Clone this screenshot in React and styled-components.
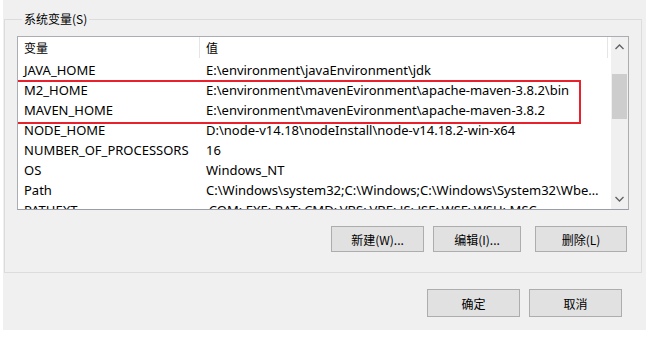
import React from 'react';
import styled, { createGlobalStyle } from 'styled-components';

const GlobalStyle = createGlobalStyle`
  html, body {
    margin: 0;
    padding: 0;
    background: #ffffff;
  }
  body {
    font-family: "Noto Sans", "Noto Sans CJK SC", sans-serif;
    font-size: 13px;
    color: #000;
  }
`;

const Dialog = styled.div`
  margin-left: 3px;
  width: 643px;
  height: 330px;
  background: #f0f0f0;
  display: flex;
  flex-direction: column;
  padding-top: 11px;
  box-sizing: border-box;
`;

const GroupBox = styled.fieldset`
  margin: 0 0 0 1px;
  width: 638px;
  box-sizing: border-box;
  border: 1px solid #dcdcdc;
  padding: 9px 12px 20px 12px;
  display: flex;
  flex-direction: column;
`;

const Legend = styled.legend`
  margin-left: 5px;
  padding: 0 2px;
  font-size: 12px;
  line-height: 16px;
  font-family: "Noto Sans CJK SC", sans-serif;
`;

const ListBox = styled.div`
  position: relative;
  width: 612px;
  height: 174px;
  box-sizing: border-box;
  border: 1px solid #abadb3;
  border-bottom-color: #9a9ca6;
  background: #fff;
  display: flex;
  overflow: hidden;
`;

const Table = styled.div`
  flex: 1;
  display: flex;
  flex-direction: column;
  overflow: hidden;
`;

const HeaderRow = styled.div`
  display: grid;
  grid-template-columns: 182px 408px;
  height: 23px;
  flex-shrink: 0;
`;

const HeaderCell = styled.div`
  display: flex;
  align-items: center;
  padding: 0 6px;
  font-family: "Noto Sans CJK SC", sans-serif;
  font-size: 12px;
  border-right: 1px solid #e5e5e5;
  margin: 0 0 2px;
`;

const Row = styled.div`
  display: grid;
  grid-template-columns: 182px 408px;
  height: 20px;
  flex-shrink: 0;
  align-items: center;
`;

const Cell = styled.div`
  padding: 0 6px;
  white-space: nowrap;
  overflow: hidden;
  text-overflow: ${(p) => (p.$ellipsis ? 'ellipsis' : 'clip')};
  line-height: 20px;
`;

const ScrollBar = styled.div`
  width: 17px;
  background: #f0f0f0;
  display: flex;
  flex-direction: column;
  align-items: center;
  flex-shrink: 0;
`;

const ArrowBox = styled.div`
  height: 20px;
  width: 17px;
  display: flex;
  align-items: center;
  justify-content: center;
  flex-shrink: 0;
`;

const Track = styled.div`
  flex: 1;
  width: 17px;
  position: relative;
`;

const Thumb = styled.div`
  position: absolute;
  left: 1px;
  width: 15px;
  background: #cdcdcd;
`;

const Highlight = styled.div`
  position: absolute;
  left: -2px;
  top: 43px;
  width: 565px;
  height: 44px;
  box-sizing: border-box;
  border: 2px solid #e8212d;
  pointer-events: none;
`;

const ButtonRow = styled.div`
  display: flex;
  justify-content: flex-end;
  margin-top: 16px;
  margin-right: 2px;
`;

const Button = styled.button`
  width: ${(p) => p.$w}px;
  height: ${(p) => p.$h || 26}px;
  margin-left: ${(p) => p.$gap || 0}px;
  background: #e1e1e1;
  border: 1px solid #adadad;
  font-family: "Noto Sans CJK SC", sans-serif;
  font-size: 12px;
  color: #000;
  padding: 0;
`;

const Footer = styled.div`
  display: flex;
  justify-content: flex-end;
  padding: 16px 24px 0 0;
`;

const Chevron = ({ up }) => (
  <svg width="9" height="6" viewBox="0 0 9 6">
    <path
      d={up ? 'M0.5 5 L4.5 1 L8.5 5' : 'M0.5 1 L4.5 5 L8.5 1'}
      fill="none"
      stroke="#606060"
      strokeWidth="1.3"
    />
  </svg>
);

const rows = [
  ['JAVA_HOME', 'E:\\environment\\javaEnvironment\\jdk'],
  ['M2_HOME', 'E:\\environment\\mavenEvironment\\apache-maven-3.8.2\\bin'],
  ['MAVEN_HOME', 'E:\\environment\\mavenEvironment\\apache-maven-3.8.2'],
  ['NODE_HOME', 'D:\\node-v14.18\\nodeInstall\\node-v14.18.2-win-x64'],
  ['NUMBER_OF_PROCESSORS', '16'],
  ['OS', 'Windows_NT'],
  ['Path', 'C:\\Windows\\system32;C:\\Windows;C:\\Windows\\System32\\Wbem;C:\\Windows'],
  ['PATHEXT', '.COM;.EXE;.BAT;.CMD;.VBS;.VBE;.JS;.JSE;.WSF;.WSH;.MSC'],
];

export default function App() {
  return (
    <>
      <GlobalStyle />
      <Dialog>
        <GroupBox>
          <Legend>系统变量(S)</Legend>
          <ListBox>
            <Table>
              <HeaderRow>
                <HeaderCell>变量</HeaderCell>
                <HeaderCell>值</HeaderCell>
              </HeaderRow>
              {rows.map(([name, value]) => (
                <Row key={name}>
                  <Cell>{name}</Cell>
                  <Cell $ellipsis={name === 'Path'}>{value}</Cell>
                </Row>
              ))}
            </Table>
            <ScrollBar>
              <ArrowBox>
                <Chevron up />
              </ArrowBox>
              <Track>
                <Thumb style={{ top: 17, height: 45 }} />
              </Track>
              <ArrowBox>
                <Chevron />
              </ArrowBox>
            </ScrollBar>
            <Highlight />
          </ListBox>
          <ButtonRow>
            <Button $w={93}>新建(W)...</Button>
            <Button $w={88} $gap={9}>编辑(I)...</Button>
            <Button $w={92} $gap={14}>删除(L)</Button>
          </ButtonRow>
        </GroupBox>
        <Footer>
          <Button $w={93} $h={28}>确定</Button>
          <Button $w={93} $h={28} $gap={9}>取消</Button>
        </Footer>
      </Dialog>
    </>
  );
}
